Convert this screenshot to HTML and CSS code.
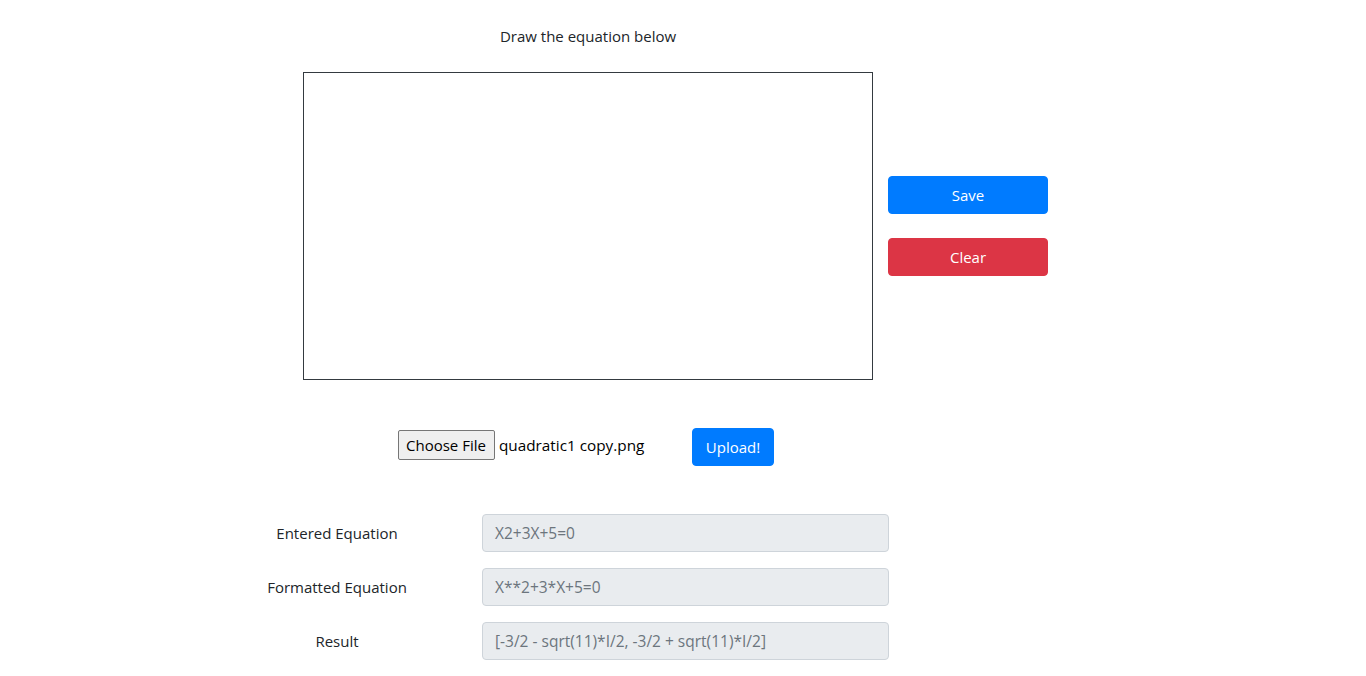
FILE: index.html
```html
<!DOCTYPE html>
<html>
<head>
<meta charset="utf-8">
<link rel="stylesheet" href="styles.css">
</head>
<body>
<main class="page">
  <section class="draw">
    <p class="draw-title">Draw the equation below</p>
    <div class="draw-row">
      <div class="canvas"></div>
      <div class="actions">
        <button class="btn btn-blue btn-wide">Save</button>
        <button class="btn btn-red btn-wide">Clear</button>
      </div>
    </div>
  </section>
  <section class="upload">
    <div class="file">
      <span class="file-btn">Choose File</span>
      <span class="file-name">quadratic1 copy.png</span>
    </div>
    <button class="btn btn-blue btn-upload">Upload!</button>
  </section>
  <section class="results">
    <div class="row">
      <label class="label">Entered Equation</label>
      <div class="field">X2+3X+5=0</div>
    </div>
    <div class="row">
      <label class="label">Formatted Equation</label>
      <div class="field">X**2+3*X+5=0</div>
    </div>
    <div class="row">
      <label class="label">Result</label>
      <div class="field">[-3/2 - sqrt(11)*I/2, -3/2 + sqrt(11)*I/2]</div>
    </div>
  </section>
</main>
</body>
</html>
```

FILE: styles.css
```css
* { box-sizing: border-box; }
html, body { margin: 0; padding: 0; background: #fff; }
body {
  font-family: "Open Sans", "Noto Sans", sans-serif;
  font-size: 15px;
  color: #212529;
  line-height: 1.5;
}
.page { width: 1366px; height: 676px; overflow: hidden; }

.draw { padding-top: 24px; padding-left: 303px; }
.draw-title { margin: 0; width: 570px; text-align: center; height: 48px; line-height: 24px; }
.draw-row { display: flex; align-items: flex-start; }
.canvas { width: 570px; height: 308px; border: 1px solid #343a40; background: #fff; }
.actions {
  display: flex; flex-direction: column; gap: 24px;
  margin-left: 15px; padding-top: 104px;
}

.btn {
  font-family: inherit; font-size: 15px; color: #fff;
  border: 1px solid transparent; border-radius: 4px;
  height: 38px; padding: 0 12px; line-height: 36px; cursor: pointer;
}
.btn-blue { background: #007bff; border-color: #007bff; }
.btn-red { background: #dc3545; border-color: #dc3545; }
.btn-wide { width: 160px; }
.btn-upload { width: 82px; padding: 0; }

.upload {
  display: flex; align-items: center;
  padding-left: 398px; margin-top: 48px; height: 38px;
}
.file { display: flex; align-items: center; width: 294px; margin-bottom: 4px; }
.file-btn {
  display: inline-block; height: 30px; line-height: 28px;
  padding: 0 7px; background: #efefef; border: 1px solid #767676;
  border-radius: 2px; font-size: 15px; color: #000; width: 97px;
}
.file-name { margin-left: 4px; font-size: 15.3px; color: #000; }

.results { margin-top: 48px; display: flex; flex-direction: column; gap: 16px; }
.row { display: flex; align-items: center; }
.label { width: 190px; margin-left: 242px; text-align: center; }
.field {
  margin-left: 50px; width: 407px; height: 38px;
  background: #e9ecef; border: 1px solid #ced4da; border-radius: 4px;
  padding: 0 12px; line-height: 36px; color: #6c757d; font-size: 15.5px;
  white-space: nowrap; overflow: hidden;
}
```
